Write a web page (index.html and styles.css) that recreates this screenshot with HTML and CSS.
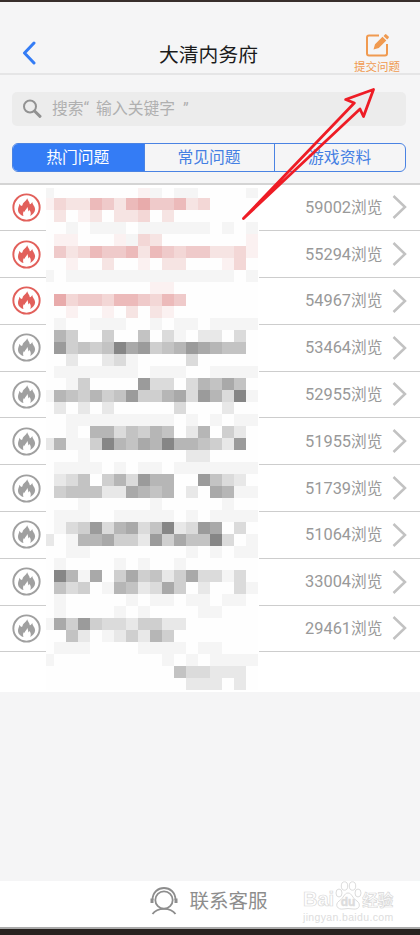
FILE: index.html
```html
<!DOCTYPE html>
<html lang="zh-CN">
<head>
<meta charset="utf-8">
<title>大清内务府</title>
<link rel="stylesheet" href="styles.css">
</head>
<body>
<svg class="defs" aria-hidden="true">
  <symbol id="flame" viewBox="0 0 30 30">
    <circle cx="15" cy="15" r="13.6" fill="none" stroke="currentColor" stroke-width="2"/>
    <path fill="currentColor" d="M15.700 5.500c.6 2.200 2.500 3.700 2.700 6.200l1-.3 1.700-2.200c-.3 2.200 2.900 4.500 2.800 7.900-.1 2.900-2.500 5.500-5.100 6.700 1.200-2.600.6-4.600-.8-6.200l-1.100 1.600c-.1-2.300-.6-3.500-1.200-4.600-.3 2.200-2.400 3.100-2.500 4.800l-1-.6c-1.100 2-.8 3.500-.3 5-3-.8-5.600-3-5.700-6.200-.1-2.700 1.400-4.100 1.400-6.400l1.800 2.300 1.500-.8c.2-3.300 3.900-4 4.800-7.200z"/>
  </symbol>
  <symbol id="chevron" viewBox="0 0 16 26">
    <path fill="none" stroke="currentColor" stroke-width="2.500" d="M1.500 2 13 13 1.500 24"/>
  </symbol>
</svg>
<div class="app">
  <header class="nav">
    <svg class="back" viewBox="0 0 14 24"><path d="M12 2 2.500 12 12 22"/></svg>
    <h1>大清内务府</h1>
    <div class="submit">
      <svg viewBox="0 0 24 24"><path class="box" d="M14 2.500H4Q2 2.500 2 4.500v16q0 2 2 2h16q2 0 2-2V11"/><path class="pen" d="M8.500 16.500l1.500-5.200 7.500-7.500 3.800 3.800-7.500 7.500zM18.500 2.900l1.500-1.500q.7-.6 1.400 0l2.200 2.200q.6.700 0 1.300L22.200 6.500z"/></svg>
      <span>提交问题</span>
    </div>
  </header>
  <div class="search">
    <svg viewBox="0 0 20 20"><circle cx="8" cy="7.500" r="6"/><path d="M12.500 12 18 17.300"/></svg>
    <span>搜索<i class="open">“</i> 输入关键字 <i>”</i></span>
  </div>
  <nav class="tabs"><span class="on">热门问题</span><span>常见问题</span><span>游戏资料</span></nav>
  <main class="list">
    <div id="rows"></div>
    <div class="mosaic" id="mosaic"></div>
  </main>
  <footer class="contact">
    <svg viewBox="0 0 28 30"><circle cx="14" cy="14" r="8.700"/><path d="M2.500 14C2.500-2 25.500-2 25.500 14M2.500 28Q6 22.800 14 22.800T25.500 28"/><path class="ear" d="M2 12.500v4.500M26 12.500v4.500"/></svg>
    <span>联系客服</span>
  </footer>
  <div class="bottom"></div>
  <svg class="arrow" viewBox="0 0 140 144"><path d="M3.500 142.500 114.300 27 105.700 23.500 133.500 13.500 123.500 40.500 120 33Z"/></svg>
  <div class="mark">
    <div class="brand"><b>Bai</b><svg viewBox="0 0 28 30"><ellipse cx="5" cy="12" rx="3" ry="4"/><ellipse cx="10.500" cy="5" rx="3.200" ry="4.200"/><ellipse cx="18.500" cy="5" rx="3.200" ry="4.200"/><ellipse cx="24" cy="12" rx="3" ry="4"/><path d="M14 12C10 12 10 17 5 20 0 24 4 29 9 28Q14 27 19 28C26 29 27 23 23 20 18 17 18 12 14 12Z"/><text x="14" y="25">du</text></svg><b class="cn">经验</b></div>
    <div class="url">jingyan.baidu.com</div>
  </div>
</div>
<script src="app.js"></script>
</body>
</html>
```
FILE: styles.css
```css
* { box-sizing: border-box; }
body { margin: 0; font-family: Roboto, "Noto Sans CJK SC", sans-serif; background: #f5f5f5; }
.defs { display: none; }
.app { position: relative; width: 420px; height: 935px; overflow: hidden; display: flex; flex-direction: column; background: #f5f5f6; border-top: 2px solid #382e2c; }
.nav { height: 73px; flex: none; border-bottom: 2px solid #e5e5e6; display: grid; grid-template-columns: 110px 1fr 110px; align-items: start; padding-top: 30px; }
.back { width: 14px; height: 24px; margin: 9px 0 0 22px; fill: none; stroke: #347cf5; stroke-width: 3; stroke-linecap: round; stroke-linejoin: round; }
h1 { margin: 10px 0 0; padding-right: 3px; font-size: 19.800px; line-height: 28px; font-weight: 400; color: #1b1b1b; text-align: center; }
.submit { display: flex; flex-direction: column; align-items: center; margin: 1px 0 0 24px; width: 86px; color: #f09a50; font-size: 11.500px; line-height: 16px; }
.submit svg { width: 24px; height: 24px; flex: none; }
.submit span { margin-top: 2px; }
.box { fill: none; stroke: #f09a50; stroke-width: 2; }
.pen { fill: #f09a50; }
.search { flex: none; height: 34px; margin: 17px 14px 0 12px; border-radius: 5px; background: #ececec; display: flex; align-items: center; color: #b0b0b0; font-size: 15.800px; padding-left: 10px; gap: 10px; }
.search svg { width: 20px; height: 20px; fill: none; stroke: #929292; stroke-width: 2; }
.search path { stroke-width: 3; stroke-linecap: round; }
.search span { line-height: 24px; white-space: pre; }
.search i { font-style: normal; margin-left: 4px; }
.search .open { margin: 0 3px 0 0; }
.tabs { flex: none; display: grid; grid-template-columns: 1fr 1fr 1fr; height: 29px; margin: 17px 14px 0 12px; border: 1px solid #4a83e3; border-radius: 6px; overflow: hidden; font-size: 15.800px; line-height: 27px; text-align: center; color: #447fe3; }
.tabs span { padding-right: 1px; }
.tabs span + span { border-left: 1px solid #4a83e3; }
.tabs .on { background: #347cf5; color: #fff; }
.list { position: relative; flex: none; height: 509px; margin-top: 11px; border-top: 2px solid #d4d4d4; background: #fff; }
#rows { margin-top: -0.600px; }
.row { height: 46.800px; border-bottom: 1.500px solid #cdcdcd; display: flex; align-items: center; padding: 0 12px; color: #a0a0a0; }
.row .flame { width: 29px; height: 29px; }
.row.hot .flame { color: #e2605b; }
.views { margin-left: auto; width: 80px; font-size: 15.700px; color: #999; white-space: nowrap; line-height: 22px; padding-top: 1px; }
.views b { font-weight: 400; font-size: 16.400px; }
.row .chev { width: 16px; height: 26px; margin-left: 7px; color: #c2c2c2; }
.mosaic { position: absolute; left: 46px; top: 3px; width: 213px; height: 502px; background: #fff; display: grid; grid-template-columns: 8px repeat(17, 12px); grid-template-rows: 10px repeat(41, 12px); }
.contact { flex: none; height: 46px; margin-top: 189px; background: #fff; display: flex; align-items: center; justify-content: center; gap: 11px; color: #8d8d8d; font-size: 19.500px; line-height: 28px; padding-right: 2px; }
.contact span { margin-top: -4px; }
.contact svg { width: 28px; height: 30px; margin-top: -7px; fill: none; stroke: #8d8d8d; stroke-width: 1.800; }
.contact .ear { stroke-width: 3; }
.bottom { flex: 1; border-top: 2px solid #aaa; background: #28221f; }
.arrow { position: absolute; left: 240px; top: 74px; width: 140px; height: 144px; fill: none; stroke: #ee1c25; stroke-width: 2.800; stroke-linejoin: round; overflow: visible; }
.mark { position: absolute; left: 303px; top: 878px; width: 94px; color: #fff; -webkit-text-stroke: 0.700px #d9d9d9; }
.brand { display: flex; align-items: flex-end; height: 31px; }
.brand b { font: 700 20px/24px "Liberation Sans", sans-serif; }
.brand svg { width: 28px; height: 30px; fill: #fff; stroke: #dcdcdc; stroke-width: 1; flex: none; }
.brand text { font: 700 12px "Liberation Sans", sans-serif; text-anchor: middle; stroke-width: .5; fill: #ddd; }
.brand .cn { font: 700 15.500px/24px "Noto Sans CJK SC", sans-serif; }
.url { font: 10.500px/13px "Liberation Sans", sans-serif; color: #ddd; -webkit-text-stroke: 0; white-space: nowrap; letter-spacing: .350px; }
```
FILE: app.js
```js
const views = [59002, 55294, 54967, 53464, 52955, 51955, 51739, 51064, 33004, 29461];
document.getElementById('rows').innerHTML = views.map((n, i) =>
  `<div class="row${i < 3 ? ' hot' : ''}"><svg class="flame"><use href="#flame"/></svg><span class="views"><b>${n}</b>浏览</span><svg class="chev"><use href="#chevron"/></svg></div>`).join('');

// One character per mosaic cell: digits are grays, letters are reds.
const tones = {
  '.': '#fefefe', 1: '#f5f5f5', 2: '#e8e8e8', 3: '#dbdbdb', 4: '#cfcfcf', 5: '#c3c3c3', 6: '#b6b6b6', 7: '#a9a9a9', 8: '#9b9b9b', 9: '#868686',
  a: '#fbf1f1', b: '#f6e4e3', c: '#f3d7d6', d: '#efcaca', e: '#ecbaba', f: '#e8abab'
};
const cells = `
1.......a1.11....1
acbbedbefddebc....
.b.ab.bbc.b.......
..1.111.111111.1.1
.aa...a1cb.......a
.dbceddebedcddbbca
..a..b..a.bb...ac.
1.11111111111111.1
.........aa.......
.fcddceedced......
..a..a.b.ba.......
.1..111..1.11.1111
.64..4..5.31.22.3.
.8454597845687655.
..2..231....3.....
.1111111.111..1111
..14....833.36575.
165464584467386391
.2.2.2.....3...2..
..111111111.1.1.11
..1.6635465.26.42.
26114965769665428.
...1........22....
.1111.1.11.1111111
.235.463866..8532.
.4555227656.2.7611
...1.....1.....1..
.111..11111.1.1111
.13483673592387.3.
2.16674428475593.1
..11........1.1.11
.1....1.1..1......
.9617.47452473313.
.534.1652374.2..31
.1.....1.11.11.11.
.1....1.1....11...
174843324422......
..52.124264.......
.111....1111.11...
1.........1.1.1111
...........533222.
............222.2.`.trim().replace(/\s/g, '');
document.getElementById('mosaic').innerHTML = [...cells].map(c => `<div style="background:${tones[c]}"></div>`).join('');
```
